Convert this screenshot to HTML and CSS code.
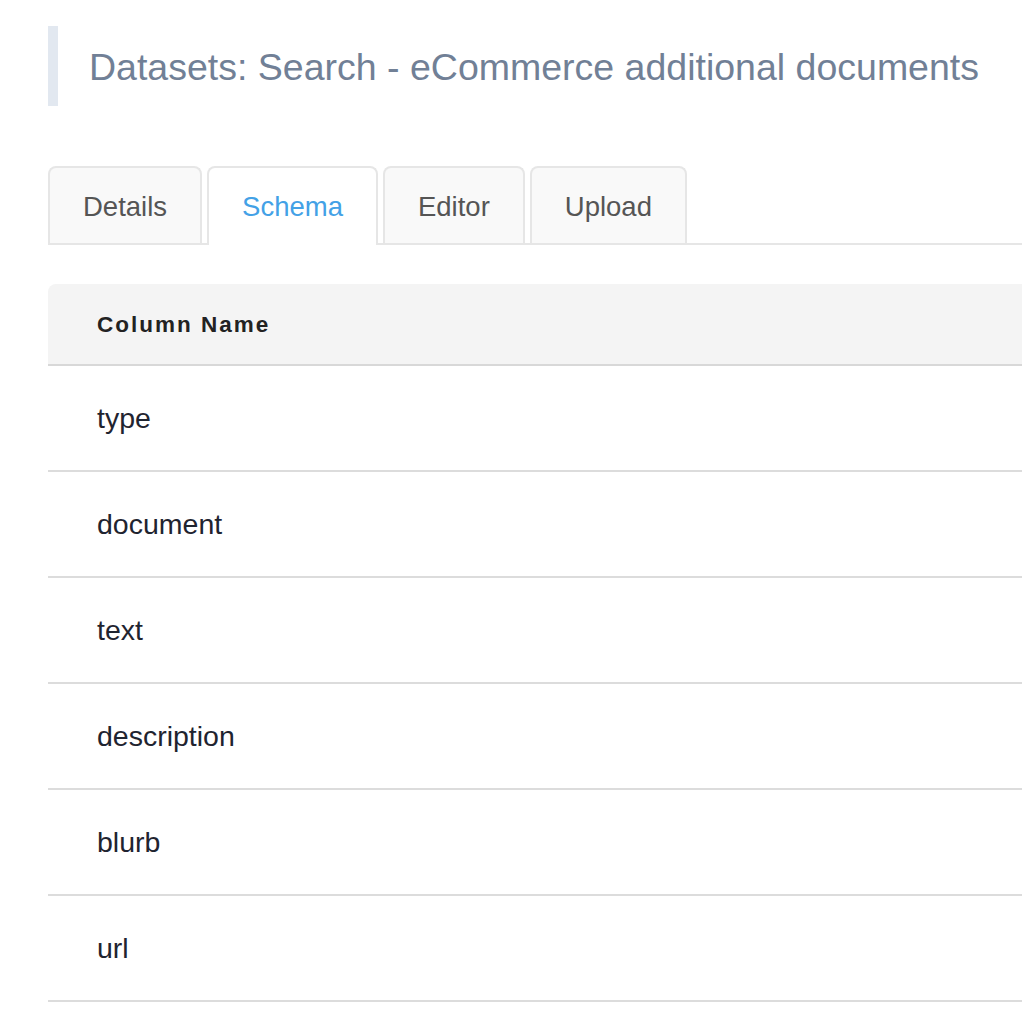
FILE: index.html
```html
<!doctype html>
<html lang="en">
<head>
  <meta charset="UTF-8" />
  <meta name="viewport" content="width=device-width, initial-scale=1" />
  <title>Datasets: Search - eCommerce additional documents</title>
  <link rel="stylesheet" href="styles.css">
</head>
<body>
  <div class="page">
    <h1 class="page-title">Datasets: Search - eCommerce additional documents</h1>

    <ul class="tabs">
      <li class="tab">Details</li>
      <li class="tab active">Schema</li>
      <li class="tab">Editor</li>
      <li class="tab">Upload</li>
    </ul>

    <table class="schema">
      <thead>
        <tr><th>Column Name</th></tr>
      </thead>
      <tbody>
        <tr><td>type</td></tr>
        <tr><td>document</td></tr>
        <tr><td>text</td></tr>
        <tr><td>description</td></tr>
        <tr><td>blurb</td></tr>
        <tr><td>url</td></tr>
      </tbody>
    </table>
  </div>
</body>
</html>
```

FILE: styles.css
```css
body {
  margin: 0;
  padding: 0;
  background: #fff;
  font-family: "Liberation Sans", Arial, sans-serif;
}
.page {
  padding: 26px 0 0 48px;
}
.page-title {
  margin: 0;
  height: 80px;
  display: flex;
  align-items: center;
  padding-left: 31px;
  padding-top: 2px;
  box-sizing: border-box;
  border-left: 10px solid #e2e8f0;
  font-size: 37.5px;
  font-weight: normal;
  color: #718096;
}
.tabs {
  list-style: none;
  margin: 60px 0 0 0;
  padding: 0;
  display: flex;
  gap: 5px;
  border-bottom: 2px solid #e6e6e6;
  height: 77px;
}
.tab {
  height: 77px;
  box-sizing: border-box;
  padding: 3px 33px 0;
  display: flex;
  align-items: center;
  font-size: 27.5px;
  color: #555;
  background: #f9f9f9;
  border: 2px solid #e6e6e6;
  border-bottom: none;
  border-radius: 8px 8px 0 0;
}
.tab.active {
  background: #fff;
  color: #43a1e6;
  height: 79px;
  padding-bottom: 2px;
}
.schema {
  margin-top: 39px;
  width: 100%;
  border-collapse: collapse;
}
.schema th {
  background: #f4f4f4;
  height: 78px;
  text-align: left;
  padding: 2px 0 0 49px;
  font-size: 22.5px;
  letter-spacing: 2px;
  color: #222;
  border-bottom: 2px solid #d8d8d8;
  border-radius: 8px 0 0 0;
}
.schema td {
  height: 104px;
  padding: 0 0 0 49px;
  font-size: 28.5px;
  color: #1f2430;
  border-bottom: 2px solid #dcdcdc;
}
```
